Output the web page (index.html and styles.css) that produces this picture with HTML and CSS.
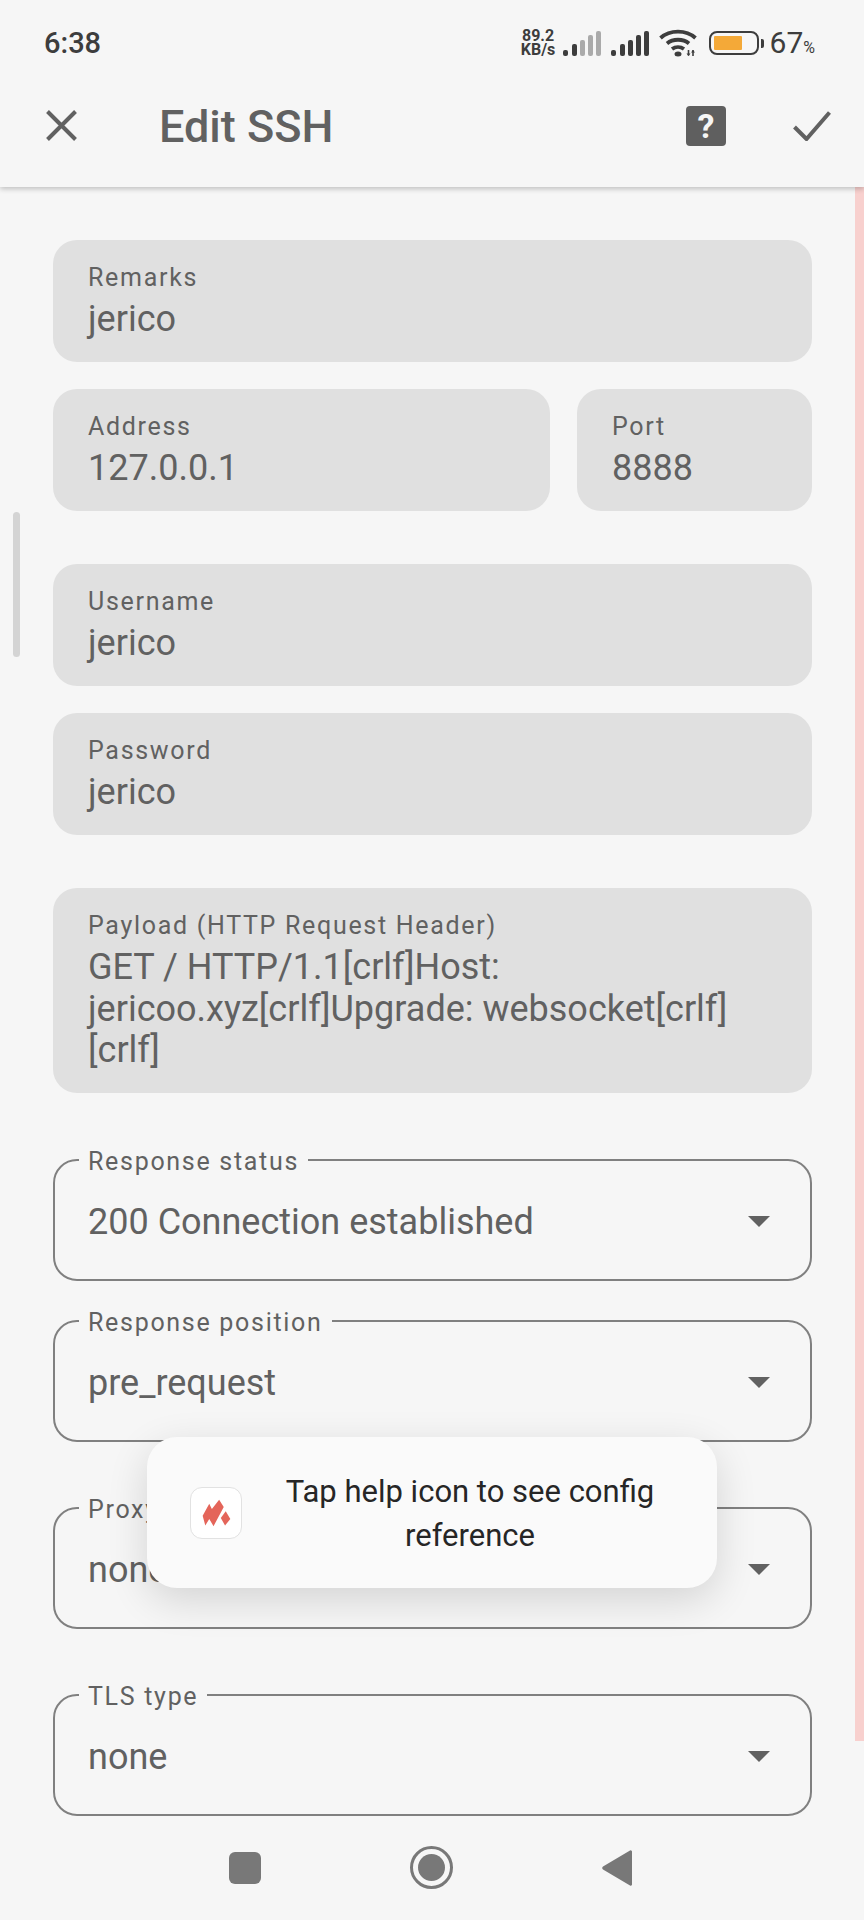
FILE: index.html
```html
<!DOCTYPE html>
<html lang="en">
<head>
    <meta charset="UTF-8">
    <meta name="viewport" content="width=device-width, initial-scale=1.0">
    <title>Edit SSH</title>
    <link rel="stylesheet" href="styles.css">
</head>
<body>

<div class="screen">
    <div class="top-bar">
        <div class="status-bar">
            <span class="clock">6:38</span>
            <div class="status-icons">
                <div class="net-speed"><span>89.2</span><span>KB/s</span></div>
                <svg class="signal" width="38" height="25" viewBox="0 0 38 25">
                    <rect x="0" y="19" width="5" height="6" rx="2" fill="#3d3d3d"/>
                    <rect x="9" y="13" width="5" height="12" rx="2" fill="#3d3d3d"/>
                    <rect x="17" y="9" width="5" height="16" rx="2" fill="#aaa"/>
                    <rect x="25" y="4" width="5" height="21" rx="2" fill="#aaa"/>
                    <rect x="33" y="0" width="5" height="25" rx="2" fill="#aaa"/>
                </svg>
                <svg class="signal" width="38" height="25" viewBox="0 0 38 25">
                    <rect x="0" y="19" width="5" height="6" rx="2" fill="#3d3d3d"/>
                    <rect x="9" y="13" width="5" height="12" rx="2" fill="#3d3d3d"/>
                    <rect x="17" y="9" width="5" height="16" rx="2" fill="#3d3d3d"/>
                    <rect x="25" y="4" width="5" height="21" rx="2" fill="#3d3d3d"/>
                    <rect x="33" y="0" width="5" height="25" rx="2" fill="#3d3d3d"/>
                </svg>
                <svg class="wifi" width="38" height="28" viewBox="0 0 38 28" fill="none" stroke="#3d3d3d" stroke-width="3.8">
                    <path d="M1.500 9C11 .5 27 .5 36.500 9"/>
                    <path d="M8 14.500c6-5 16-5 22 0"/>
                    <path d="M13 20c3.500-2.500 8.500-2.500 12 0"/>
                    <ellipse cx="19" cy="25" rx="3.500" ry="2.500" fill="#3d3d3d" stroke="none"/>
                    <path d="M29.500 21v5.500M34 21v6" stroke-width="1.600"/>
                    <path d="M27.500 24.500h4l-2 2.500zM32 23.500h4l-2-2.500z" fill="#3d3d3d" stroke="none"/>
                </svg>
                <div class="battery">
                    <div class="battery-body"><div class="battery-fill"></div></div>
                    <div class="battery-nub"></div>
                </div>
                <div class="battery-text">67<small>%</small></div>
            </div>
        </div>
        <div class="app-bar">
            <svg class="close-icon" width="31" height="31" viewBox="0 0 31 31" stroke="#616161" stroke-width="4">
                <path d="M1.500 1.500l28 28M29.500 1.500l-28 28"/>
            </svg>
            <h1>Edit SSH</h1>
            <div class="help-icon">?</div>
            <svg class="check-icon" width="38" height="30" viewBox="0 0 38 30" fill="none" stroke="#616161" stroke-width="4">
                <path d="M1.500 16l12 12L36.500 1.500"/>
            </svg>
        </div>
    </div>

    <div class="form">
        <div class="group">
            <div class="field">
                <label>Remarks</label>
                <div class="value">jerico</div>
            </div>
            <div class="row">
                <div class="field address">
                    <label>Address</label>
                    <div class="value">127.0.0.1</div>
                </div>
                <div class="field port">
                    <label>Port</label>
                    <div class="value">8888</div>
                </div>
            </div>
        </div>

        <div class="group">
            <div class="field">
                <label>Username</label>
                <div class="value">jerico</div>
            </div>
            <div class="field">
                <label>Password</label>
                <div class="value">jerico</div>
            </div>
        </div>

        <div class="group">
            <div class="field payload">
                <label>Payload (HTTP Request Header)</label>
                <div class="value">GET / HTTP/1.1[crlf]Host:<br>jericoo.xyz[crlf]Upgrade: websocket[crlf]<br>[crlf]</div>
            </div>
        </div>

        <div class="selects">
            <div class="select">
                <label>Response status</label>
                <div class="value">200 Connection established</div>
                <div class="arrow"></div>
            </div>
            <div class="select near">
                <label>Response position</label>
                <div class="value">pre_request</div>
                <div class="arrow"></div>
            </div>
            <div class="select">
                <label>Proxy protocol</label>
                <div class="value">none</div>
                <div class="arrow"></div>
            </div>
            <div class="select">
                <label>TLS type</label>
                <div class="value">none</div>
                <div class="arrow"></div>
            </div>
        </div>
    </div>

    <div class="nav-bar">
        <div class="nav-square"></div>
        <div class="nav-circle"><div class="nav-dot"></div></div>
        <svg width="30" height="38" viewBox="0 0 30 38"><path d="M28 1.500L1 17.500a1.800 1.800 0 0 0 0 3L28 36.500a1.300 1.300 0 0 0 2-1V2.500a1.300 1.300 0 0 0-2-1z" fill="#787878"/></svg>
    </div>

    <div class="scroll-thumb"></div>
    <div class="side-strip"></div>

    <div class="toast">
        <div class="toast-logo">
            <svg width="29" height="28" viewBox="70 68 88 84" fill="#e4655a">
                <path d="M72 118L92 82l8 16 22-28 14 22-31 58-13-22-12 20z"/>
                <path d="M142 105l14 23-16 20-13-23z"/>
            </svg>
        </div>
        <div class="toast-text">Tap help icon to see config reference</div>
    </div>
</div>

</body>
</html>
```

FILE: styles.css
```css
* {
    box-sizing: border-box;
}
html, body {
    margin: 0;
    padding: 0;
}
body {
    font-family: Roboto, "Liberation Sans", sans-serif;
    background-color: #f6f6f6;
    color: #616161;
}
.screen {
    position: relative;
    width: 864px;
    height: 1920px;
    overflow: hidden;
    background: #f6f6f6;
    display: flex;
    flex-direction: column;
}

/* top */
.top-bar {
    height: 187px;
    flex-shrink: 0;
    background: #f6f6f6;
    box-shadow: 0 2px 5px rgba(0, 0, 0, 0.22);
    position: relative;
    z-index: 2;
}
.status-bar {
    height: 86px;
    padding: 0 49px 0 44px;
    display: flex;
    justify-content: space-between;
    align-items: center;
}
.clock {
    font-size: 29px;
    font-weight: 500;
    color: #3d3d3d;
}
.status-icons {
    display: flex;
    align-items: center;
}
.net-speed {
    display: flex;
    flex-direction: column;
    font-size: 16px;
    line-height: 14.500px;
    font-weight: 700;
    color: #3d3d3d;
    margin-right: 7px;
    width: 35px;
    align-items: center;
}
.signal {
    margin-right: 10px;
}
.wifi {
    margin-right: 12px;
}
.battery {
    display: flex;
    align-items: center;
    margin-right: 6px;
}
.battery-body {
    width: 50px;
    height: 24px;
    border: 2.500px solid #3d3d3d;
    border-radius: 8px;
    padding: 3px;
}
.battery-fill {
    width: 72%;
    height: 100%;
    background: #f4a938;
    border-radius: 1px;
}
.battery-nub {
    width: 3px;
    height: 9px;
    margin-left: 2px;
    background: #3d3d3d;
    border-radius: 0 2px 2px 0;
}
.battery-text {
    font-size: 30px;
    color: #3d3d3d;
    white-space: nowrap;
    margin-top: -2px;
}
.battery-text small {
    font-size: 16px;
}
.app-bar {
    height: 101px;
    display: flex;
    align-items: center;
    padding: 0 33px 22px 46px;
}
.app-bar h1 {
    margin: 2px 0 0 82px;
    font-size: 45px;
    font-weight: 500;
    flex: 1;
}
.help-icon {
    width: 40px;
    height: 40px;
    background: #5f5f5f;
    border-radius: 4px;
    color: #f6f6f6;
    font-size: 34px;
    font-weight: 700;
    text-align: center;
    line-height: 40px;
    margin-right: 67px;
}

/* form */
.form {
    flex: 1;
    min-height: 0;
    padding: 53px 52px 0 53px;
    display: flex;
    flex-direction: column;
    gap: 53px;
}
.group {
    display: flex;
    flex-direction: column;
    gap: 27px;
}
.row {
    display: flex;
    gap: 27px;
}
.field {
    background: #e0e0e0;
    border-radius: 24px;
    height: 122px;
    padding: 21px 35px 0;
}
.address {
    width: 497px;
}
.port {
    flex: 1;
}
.payload {
    height: 205px;
}
.field label, .select label {
    display: block;
    font-size: 25px;
    line-height: 33px;
    letter-spacing: 1.700px;
}
.field .value {
    margin-top: 5px;
}
.value {
    font-size: 36px;
    line-height: 41.600px;
}
.selects {
    margin-top: 13px;
    display: flex;
    flex-direction: column;
    gap: 65px;
}
.select {
    position: relative;
    height: 122px;
    flex-shrink: 0;
    border: 2px solid #808080;
    border-radius: 24px;
    padding: 41px 33px 0;
}
.select.near {
    margin-top: -26px;
}
.select label {
    position: absolute;
    top: -16px;
    left: 24px;
    padding: 0 9px;
    background: #f6f6f6;
}
.arrow {
    position: absolute;
    top: 55px;
    right: 40px;
    width: 0;
    height: 0;
    border-left: 11px solid transparent;
    border-right: 11px solid transparent;
    border-top: 11px solid #616161;
}

/* nav */
.nav-bar {
    height: 105px;
    flex-shrink: 0;
    position: relative;
    z-index: 1;
    display: flex;
    align-items: center;
    padding: 0 232px 0 229px;
    justify-content: space-between;
}
.nav-square {
    width: 32px;
    height: 32px;
    border-radius: 6px;
    background: #787878;
}
.nav-circle {
    width: 43px;
    height: 43px;
    border: 3px solid #787878;
    border-radius: 50%;
    padding: 5px;
}
.nav-dot {
    width: 100%;
    height: 100%;
    background: #787878;
    border-radius: 50%;
}

/* overlays */
.scroll-thumb {
    position: absolute;
    left: 13px;
    top: 512px;
    width: 7px;
    height: 145px;
    border-radius: 4px;
    background: #d4d4d4;
}
.side-strip {
    position: absolute;
    right: 0;
    top: 187px;
    width: 9px;
    height: 1554px;
    background: #f8d0ce;
}
.toast {
    position: absolute;
    left: 147px;
    top: 1437px;
    width: 570px;
    height: 151px;
    background: #fafafa;
    border-radius: 30px;
    box-shadow: 0 12px 40px rgba(0, 0, 0, 0.14);
    display: flex;
    align-items: center;
    padding: 0 42px 0 43px;
    z-index: 3;
}
.toast-logo {
    width: 52px;
    height: 52px;
    flex-shrink: 0;
    background: #fff;
    border: 1px solid #e2e2e2;
    border-radius: 12px;
    display: flex;
    align-items: center;
    justify-content: center;
}
.toast-text {
    flex: 1;
    padding: 2px 0 0 23px;
    font-size: 31px;
    line-height: 44px;
    text-align: center;
    color: #262626;
}
```
